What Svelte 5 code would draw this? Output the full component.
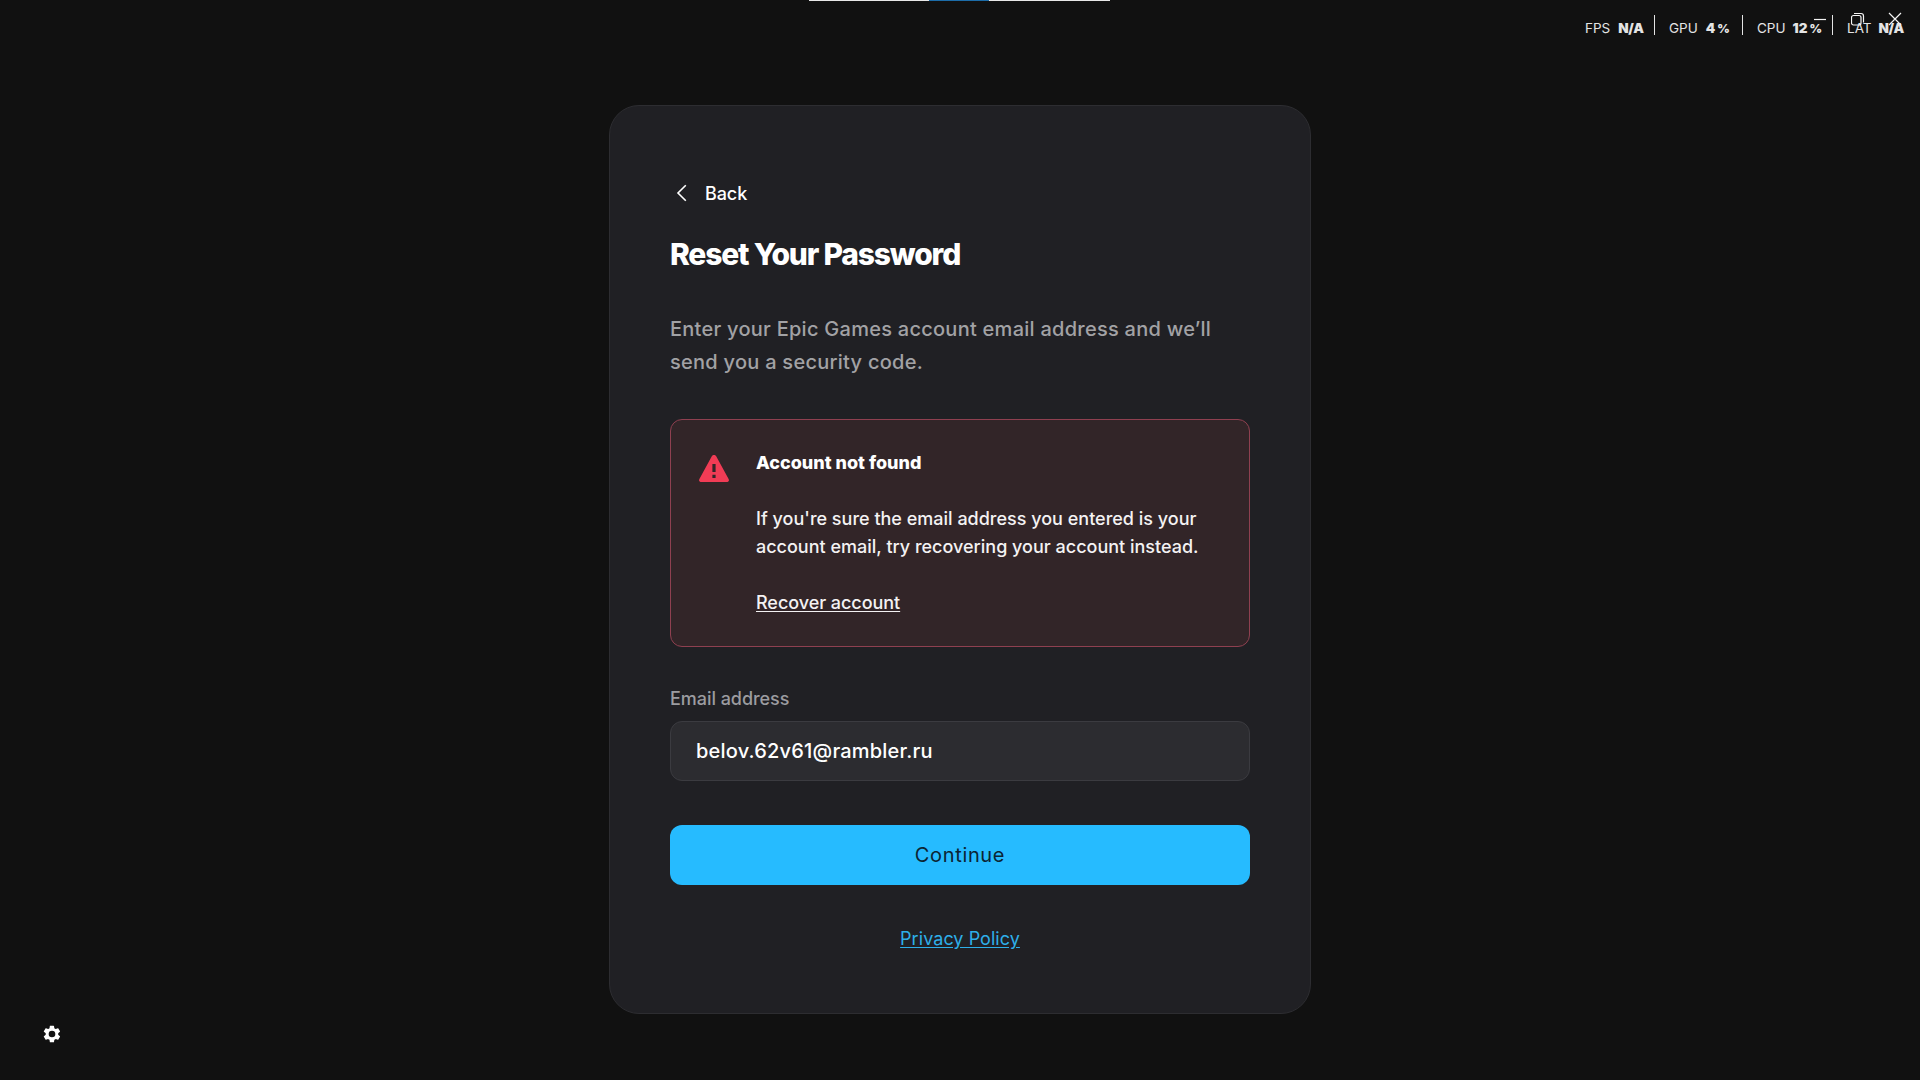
<script>
  // Password reset screen, shown after a lookup that found no account.
  let email = $state('belov.62v61@rambler.ru')

  const STATS = [
    { id: 'fps', label: 'FPS', value: 'N/A' },
    { id: 'gpu', label: 'GPU', value: '4', unit: '%' },
    { id: 'cpu', label: 'CPU', value: '12', unit: '%' },
    { id: 'lat', label: 'LAT', value: 'N/A' },
  ]
</script>

<div class="screen">
  <div class="loader"><div class="chunk"></div></div>

  <!-- Performance overlay -->
  <div class="stats">
    {#each STATS as s (s.id)}
      <div class="stat {s.id}">
        <span class="name">{s.label}</span>
        <b class="val">{s.value}</b>
        {#if s.unit}<b class="unit">{s.unit}</b>{/if}
      </div>
    {/each}
  </div>

  <!-- Window controls -->
  <div class="controls">
    <svg width="14" height="14" viewBox="0 0 14 14"><path d="M1 7.5h12" /></svg>
    <svg width="14" height="14" viewBox="0 0 14 14">
      <rect x=".5" y="3.5" width="9.5" height="9.5" rx="2" />
      <path d="M3 1.5h7a2.5 2.5 0 0 1 2.5 2.5v6.5" />
    </svg>
    <svg width="14" height="14" viewBox="0 0 14 14"><path d="M1 1l12 12M13 1L1 13" /></svg>
  </div>

  <main class="card">
    <button class="back">
      <svg width="24" height="24" viewBox="0 0 24 24"><path d="M15.8 4.2L8 12l7.8 7.8" /></svg>
      <span>Back</span>
    </button>

    <h1>Reset Your Password</h1>
    <p class="intro">Enter your Epic Games account email address and we’ll<br />send you a security code.</p>

    <section class="alert">
      <svg class="warn" width="30" height="28" viewBox="0 0 30 28">
        <path
          fill="#f13c55"
          d="M12.8 1.3C13.8-.4 16.2-.4 17.2 1.3L29.6 23.9C30.6 25.7 29.4 27 27.5 27H2.5C.6 27-.6 25.7.4 23.9Z"
        />
        <path fill="#322528" d="M13.4 9h3.2v8.1h-3.2zM13.4 19.8h3.2v3.2h-3.2z" />
      </svg>
      <div class="msg">
        <h2>Account not found</h2>
        <p>If you're sure the email address you entered is your<br />account email, try recovering your account instead.</p>
        <a class="recover" href="#recover">Recover account</a>
      </div>
    </section>

    <label for="email">Email address</label>
    <input id="email" type="text" spellcheck="false" bind:value={email} />
    <button class="submit">Continue</button>
    <a class="privacy" href="#privacy">Privacy Policy</a>
  </main>

  <button class="settings" aria-label="Settings">
    <svg width="20" height="20" viewBox="0 0 24 24">
      <path
        d="M19.4 13c0-.3.1-.6.1-1s0-.7-.1-1l2.1-1.6c.2-.2.2-.4.1-.6l-2-3.5c-.1-.2-.4-.3-.6-.2l-2.5 1c-.5-.4-1.1-.7-1.7-1l-.4-2.6c0-.2-.2-.5-.5-.5h-4c-.3 0-.5.2-.5.5L9 5.1c-.6.3-1.2.6-1.7 1l-2.5-1c-.2-.1-.5 0-.6.2l-2 3.5c-.1.2-.1.4.1.6L4.5 11c0 .3-.1.6-.1 1s0 .7.1 1l-2.2 1.6c-.2.2-.2.4-.1.6l2 3.5c.1.2.4.3.6.2l2.5-1c.5.4 1.1.7 1.7 1l.4 2.6c0 .3.2.5.5.5h4c.3 0 .5-.2.5-.5l.4-2.6c.6-.3 1.2-.6 1.7-1l2.5 1c.2.1.5 0 .6-.2l2-3.5c.1-.2.1-.4-.1-.6zM12 16a4 4 0 1 1 0-8 4 4 0 0 1 0 8z"
      />
    </svg>
  </button>
</div>

<style>
  :global(body) {
    background: #111;
  }
  .screen {
    position: relative;
    box-sizing: border-box;
    height: 100vh;
    padding-top: 105px;
    overflow: hidden;
    background: #111;
    color: #fff;
    font-family: Inter, 'Liberation Sans', sans-serif;
  }
  button {
    padding: 0;
    border: 0;
    background: none;
    color: inherit;
    font-family: inherit;
  }
  h1,
  h2,
  p {
    margin: 0;
  }

  .loader {
    position: absolute;
    top: 0;
    left: 809px;
    width: 301px;
    height: 1px;
    background: #e8e8e8;
  }
  .chunk {
    width: 60px;
    height: 1px;
    margin-left: 120px;
    background: #1c6ca8;
  }

  .stats {
    position: absolute;
    top: 15px;
    left: 1585px;
    display: flex;
    height: 20px;
    font-size: 13.5px;
    line-height: 27px;
    color: #e4e4e4;
  }
  .stat {
    display: flex;
    box-sizing: border-box;
    border-right: 1px solid #e4e4e4;
    white-space: nowrap;
  }
  .stat:last-child {
    border-right: 0;
  }
  .fps {
    width: 70px;
  }
  .gpu {
    width: 88px;
    padding-left: 14px;
  }
  .cpu {
    width: 90px;
    padding-left: 14px;
  }
  .lat {
    padding-left: 14px;
  }
  .name {
    margin-right: 8px;
  }
  .cpu .name,
  .lat .name {
    margin-right: 7px;
  }
  .val {
    font-weight: 900;
  }
  .fps .val,
  .lat .val {
    letter-spacing: -0.3px;
  }
  .unit {
    margin-left: 2px;
    font-size: 12px;
    font-weight: 900;
  }

  .controls {
    position: absolute;
    top: 12px;
    left: 1813px;
    display: flex;
    gap: 24px;
  }
  .controls svg {
    fill: none;
    stroke: #f4f4f4;
    stroke-width: 1.2;
  }
  .controls svg:last-child {
    margin-left: -1px;
  }

  .card {
    display: flex;
    flex-direction: column;
    box-sizing: border-box;
    width: 702px;
    height: 909px;
    margin: 0 auto;
    padding: 75px 60px 0;
    border: 1px solid #2d2d31;
    border-radius: 30px;
    background: #202024;
  }
  .back {
    display: flex;
    align-items: center;
    gap: 11px;
    height: 24px;
    font-size: 18px;
    font-weight: 500;
    letter-spacing: -0.1px;
  }
  .back svg {
    fill: none;
    stroke: #fff;
    stroke-width: 1.6;
  }
  h1 {
    margin-top: 31px;
    font-size: 30px;
    font-weight: 800;
    line-height: 36px;
    letter-spacing: -1.18px;
  }
  .intro {
    margin-top: 41px;
    font-size: 20px;
    font-weight: 500;
    line-height: 33px;
    letter-spacing: 0.26px;
    color: #a2a2a5;
    white-space: nowrap;
  }

  .alert {
    display: flex;
    box-sizing: border-box;
    height: 228px;
    margin-top: 40px;
    padding: 29px 27px;
    border: 1px solid #8f4050;
    border-radius: 12px;
    background: #322528;
  }
  .warn {
    flex: none;
    margin: 6px 27px 0 1px;
  }
  .msg {
    font-size: 18px;
    font-weight: 500;
    line-height: 28px;
    white-space: nowrap;
    color: #f4f2f3;
  }
  h2 {
    font-size: 18px;
    font-weight: 800;
    line-height: 28px;
    color: #fff;
  }
  .msg p {
    margin: 28px 0;
  }
  .recover {
    color: inherit;
    letter-spacing: -0.05px;
    text-underline-offset: 2px;
  }

  label {
    margin-top: 40px;
    font-size: 18px;
    font-weight: 500;
    line-height: 24px;
    letter-spacing: -0.05px;
    color: #9c9ca0;
  }
  input {
    box-sizing: border-box;
    height: 60px;
    margin: 10px 0 44px;
    padding: 0 26px 0 25px;
    border: 1px solid #3b3b40;
    border-radius: 12px;
    outline: none;
    background: #2c2c30;
    color: #fff;
    font-family: inherit;
    font-size: 20px;
    font-weight: 500;
    letter-spacing: 0.2px;
  }
  .submit {
    height: 60px;
    border-radius: 12px;
    background: #26bbff;
    color: #0c2433;
    font-size: 20px;
    font-weight: 400;
    letter-spacing: 0.65px;
  }
  .privacy {
    align-self: center;
    margin-top: 42px;
    font-size: 18px;
    line-height: 24px;
    letter-spacing: 0.05px;
    color: #2eafe9;
    text-underline-offset: 2px;
  }

  .settings {
    position: absolute;
    left: 41.5px;
    bottom: 36px;
    display: flex;
  }
  .settings svg {
    fill: #fff;
  }
</style>
